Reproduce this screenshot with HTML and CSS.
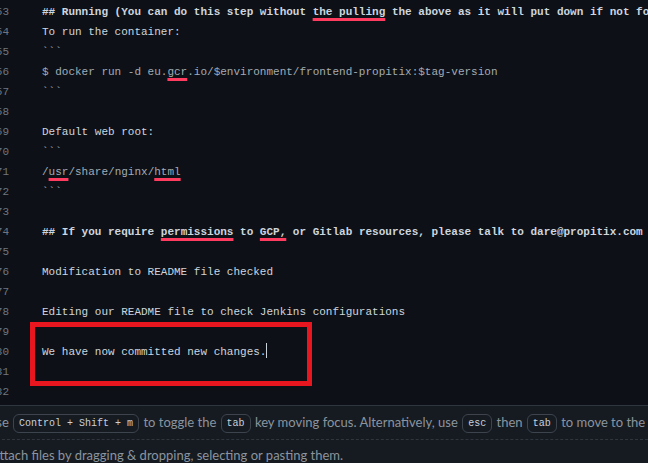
FILE: index.html
```html
<!DOCTYPE html>
<html>
<head>
<meta charset="utf-8">
<link rel="stylesheet" href="styles.css">
</head>
<body>
<div class="page">
  <div class="editor">
    <div class="line"><span class="num">53</span><span class="code head">## Running (You can do this step without <u class="sq">the pulling</u> the above as it will put down if not found locally)</span></div>
    <div class="line"><span class="num">54</span><span class="code">To run the container:</span></div>
    <div class="line"><span class="num">55</span><span class="code dim">```</span></div>
    <div class="line"><span class="num">56</span><span class="code dim">$ docker run -d eu.<u class="sq">gcr</u>.io/$environment/frontend-propitix:$tag-version</span></div>
    <div class="line"><span class="num">57</span><span class="code dim">```</span></div>
    <div class="line"><span class="num">58</span><span class="code"></span></div>
    <div class="line"><span class="num">69</span><span class="code">Default web root:</span></div>
    <div class="line"><span class="num">70</span><span class="code dim">```</span></div>
    <div class="line"><span class="num">71</span><span class="code dim">/<u class="sq">usr</u>/share/nginx/<u class="sq">html</u></span></div>
    <div class="line"><span class="num">72</span><span class="code dim">```</span></div>
    <div class="line"><span class="num">73</span><span class="code"></span></div>
    <div class="line"><span class="num">74</span><span class="code head">## If you require <u class="sq">permissions</u> to <u class="sq">GCP,</u> or Gitlab resources, please talk to dare@propitix.com</span></div>
    <div class="line"><span class="num">75</span><span class="code"></span></div>
    <div class="line"><span class="num">76</span><span class="code">Modification to README file checked</span></div>
    <div class="line"><span class="num">77</span><span class="code"></span></div>
    <div class="line"><span class="num">78</span><span class="code">Editing our README file to check Jenkins configurations</span></div>
    <div class="line"><span class="num">79</span><span class="code"></span></div>
    <div class="line"><span class="num">80</span><span class="code">We have now committed new changes.<span class="caret"></span></span></div>
    <div class="line"><span class="num">81</span><span class="code"></span></div>
    <div class="line"><span class="num">82</span><span class="code"></span></div>
    <div class="mark"></div>
  </div>
  <div class="footer">
    <div class="hint">Use <kbd>Control + Shift + m</kbd> to toggle the <kbd>tab</kbd> key moving focus. Alternatively, use <kbd>esc</kbd> then <kbd>tab</kbd> to move to the next interactive element on the page.</div>
    <div class="attach">Attach files by dragging &amp; dropping, selecting or pasting them.</div>
  </div>
</div>
</body>
</html>
```
FILE: styles.css
```css
* { box-sizing: border-box; }
html, body { margin: 0; padding: 0; background: #0d1117; }
.page { width: 648px; height: 463px; overflow: hidden; position: relative; }
.editor {
  position: relative;
  height: 405px;
  overflow: hidden;
  padding-top: 2px;
  background: #0d1117;
  font-family: "Liberation Mono", "DejaVu Sans Mono", monospace;
  font-size: 11px;
}
.line { display: flex; height: 20px; line-height: 20px; white-space: pre; }
.num { flex: 0 0 22px; margin-left: -13px; text-align: right; color: #6e7681; }
.code { margin-left: 33px; color: #cdd5de; }
.code.head { font-weight: bold; }
.code.dim { color: #a3abb4; }
.sq {
  text-decoration: underline;
  text-decoration-color: #ff3b5f;
  text-decoration-thickness: 3px;
  text-underline-offset: 3px;
  text-decoration-skip-ink: none;
}
.caret { display: inline-block; width: 1px; height: 15px; background: #c9d1d9; vertical-align: -3px; }
.mark {
  position: absolute;
  left: 30px; top: 322px;
  width: 282px; height: 64px;
  border: 5px solid #e8171f;
}
.footer {
  height: 58px;
  background: #161b22;
  border-top: 1px solid #30363d;
  font-family: Lato, "Liberation Sans", sans-serif;
  font-size: 13px;
  color: #8b949e;
  overflow: hidden;
}
.hint {
  margin-left: -13px;
  height: 34px;
  line-height: 32px;
  white-space: nowrap;
  border-bottom: 1px dashed #30363d;
}
kbd {
  display: inline-block;
  font-family: "Liberation Mono", "DejaVu Sans Mono", monospace;
  font-size: 10px;
  line-height: 17px;
  padding: 0 5px;
  margin: 0 1px;
  color: #c9d1d9;
  border: 1px solid #3d444d;
  border-radius: 6px;
  background: #161b22;
  vertical-align: 1px;
}
.attach { margin-left: -9px; padding-top: 7px; white-space: nowrap; }
```
